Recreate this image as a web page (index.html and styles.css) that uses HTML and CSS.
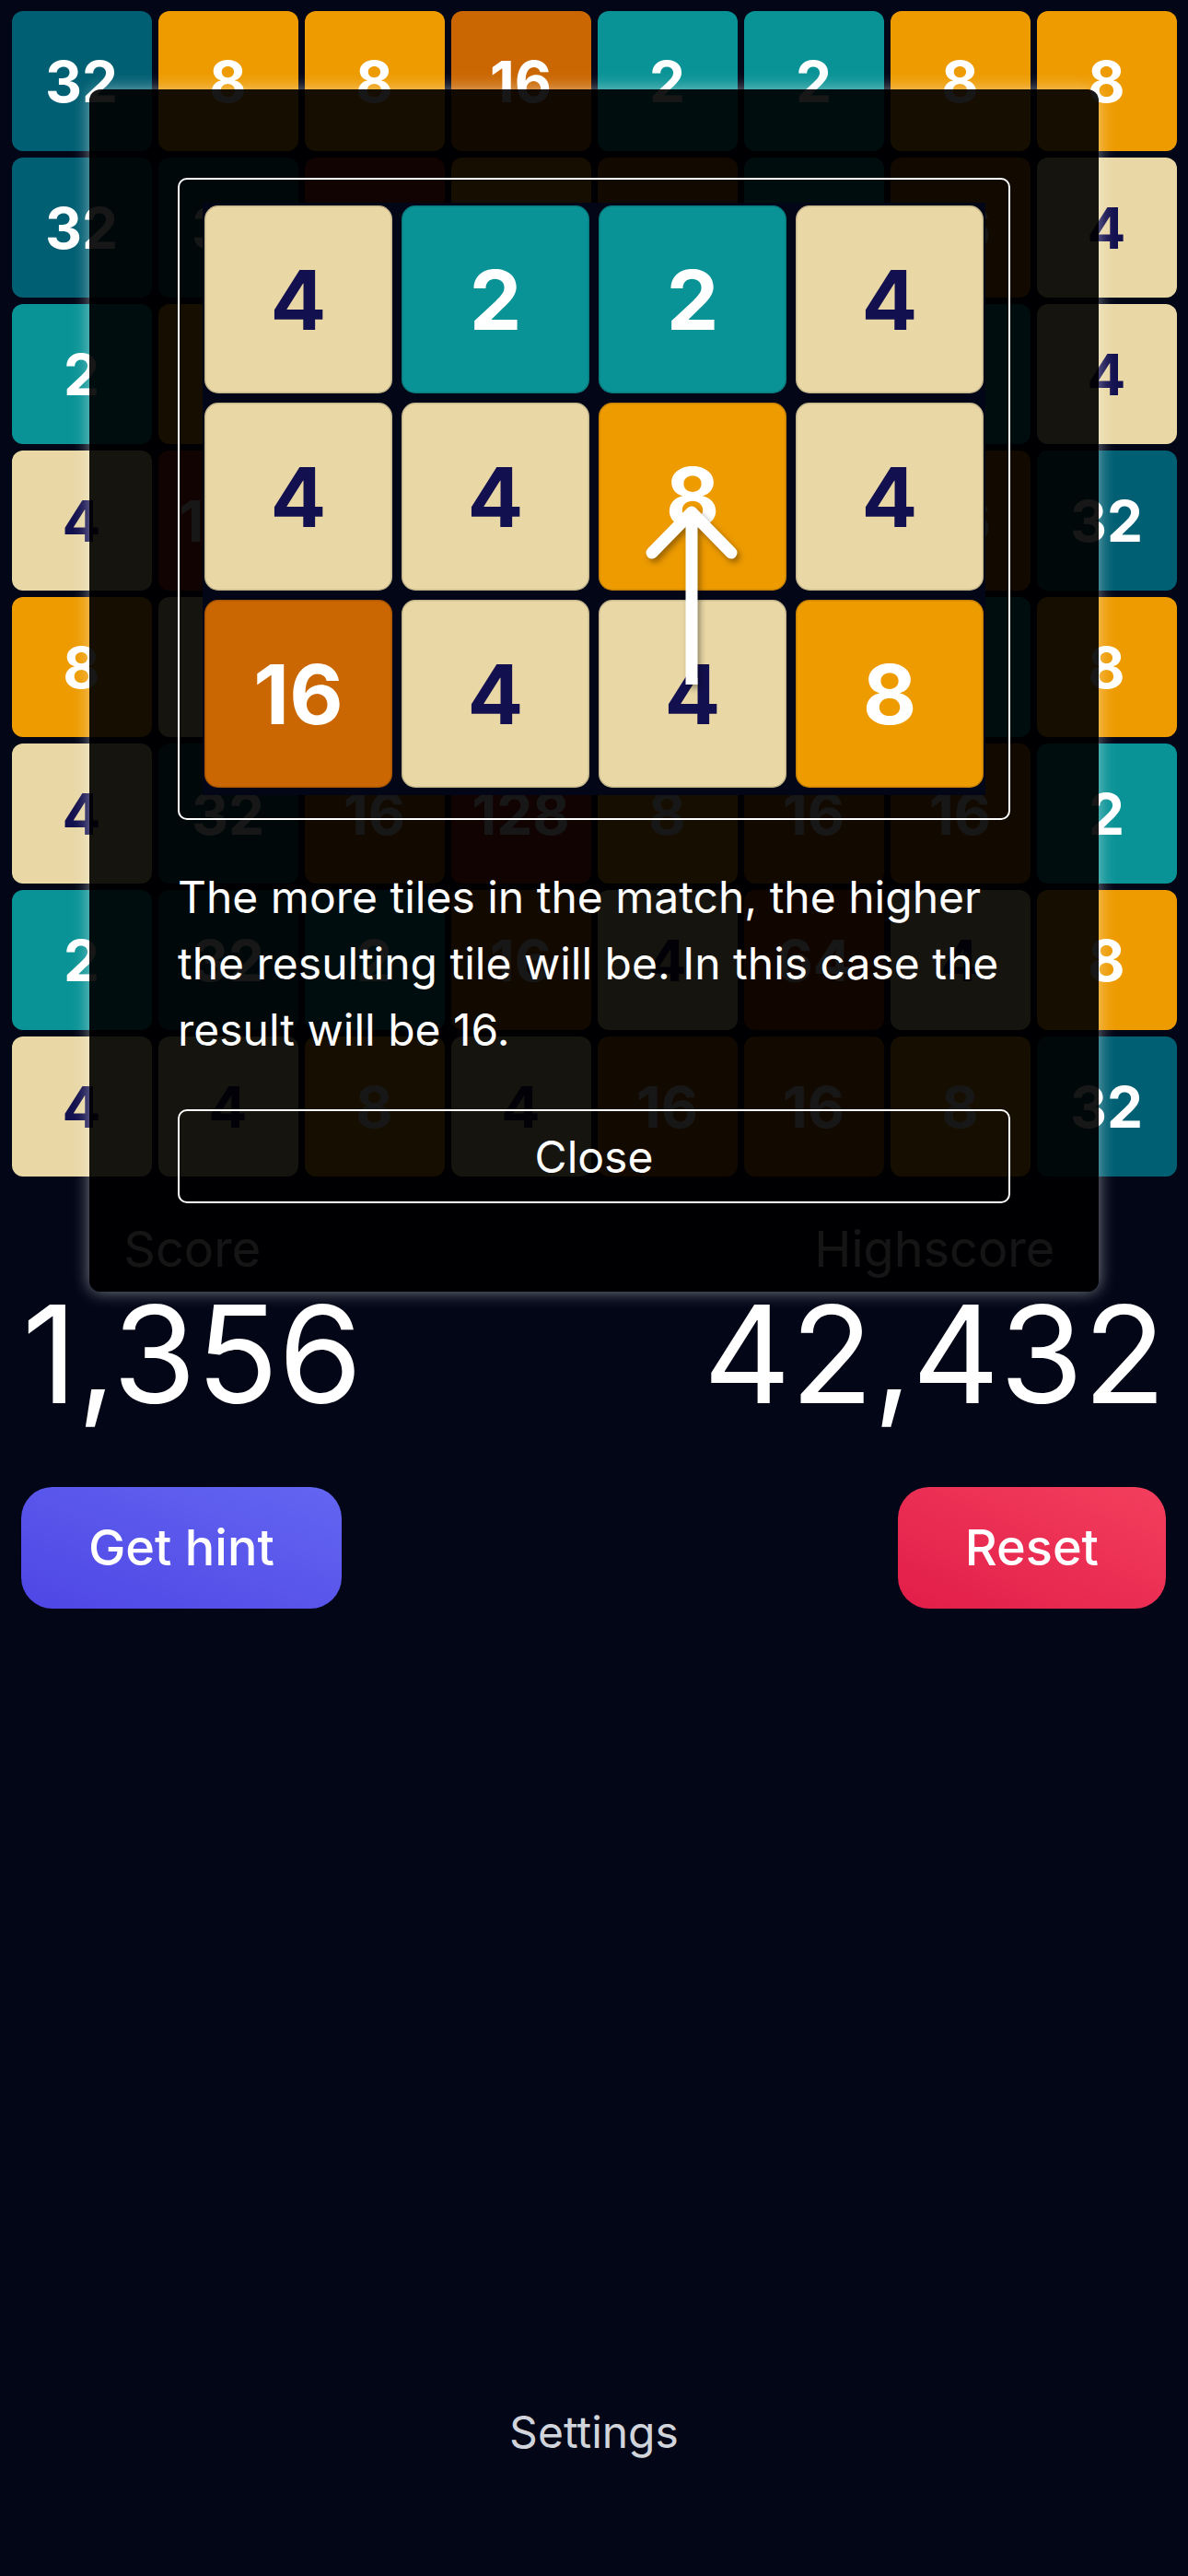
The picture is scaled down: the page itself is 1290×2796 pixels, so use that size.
FILE: index.html
```html
<!DOCTYPE html>
<html lang="en">
<head>
<meta charset="utf-8">
<title>Merge tiles</title>
<link rel="stylesheet" href="styles.css">
</head>
<body>
<div class="page">
  <div class="board">
    <div class="tile t32">32</div><div class="tile t8">8</div><div class="tile t8">8</div><div class="tile t16">16</div><div class="tile t2">2</div><div class="tile t2">2</div><div class="tile t8">8</div><div class="tile t8">8</div>
    <div class="tile t32">32</div><div class="tile t32">32</div><div class="tile t128">128</div><div class="tile t8">8</div><div class="tile t16">16</div><div class="tile t2">2</div><div class="tile t16">16</div><div class="tile t4">4</div>
    <div class="tile t2">2</div><div class="tile t8">8</div><div class="tile t4">4</div><div class="tile t2">2</div><div class="tile t16">16</div><div class="tile t4">4</div><div class="tile t2">2</div><div class="tile t4">4</div>
    <div class="tile t4">4</div><div class="tile t128">128</div><div class="tile t2">2</div><div class="tile t8">8</div><div class="tile t4">4</div><div class="tile t32">32</div><div class="tile t16">16</div><div class="tile t32">32</div>
    <div class="tile t8">8</div><div class="tile t4">4</div><div class="tile t16">16</div><div class="tile t4">4</div><div class="tile t8">8</div><div class="tile t2">2</div><div class="tile t2">2</div><div class="tile t8">8</div>
    <div class="tile t4">4</div><div class="tile t32">32</div><div class="tile t16">16</div><div class="tile t128">128</div><div class="tile t8">8</div><div class="tile t16">16</div><div class="tile t16">16</div><div class="tile t2">2</div>
    <div class="tile t2">2</div><div class="tile t32">32</div><div class="tile t2">2</div><div class="tile t16">16</div><div class="tile t4">4</div><div class="tile t64">64</div><div class="tile t4">4</div><div class="tile t8">8</div>
    <div class="tile t4">4</div><div class="tile t4">4</div><div class="tile t8">8</div><div class="tile t4">4</div><div class="tile t16">16</div><div class="tile t16">16</div><div class="tile t8">8</div><div class="tile t32">32</div>
  </div>

  <div class="scores">
    <div class="score-col">
      <div class="score-label">Score</div>
      <div class="score-value">1,356</div>
    </div>
    <div class="score-col">
      <div class="score-label">Highscore</div>
      <div class="score-value">42,432</div>
    </div>
  </div>

  <div class="actions">
    <button class="btn btn-hint">Get hint</button>
    <button class="btn btn-reset">Reset</button>
  </div>

  <div class="footer">Settings</div>
</div>

<div class="modal">
  <div class="illustration">
    <div class="shot">
      <div class="ptile t4">4</div><div class="ptile t2">2</div><div class="ptile t2">2</div><div class="ptile t4">4</div>
      <div class="ptile t4">4</div><div class="ptile t4">4</div><div class="ptile t8">8</div><div class="ptile t4">4</div>
      <div class="ptile t16">16</div><div class="ptile t4">4</div><div class="ptile t4">4</div><div class="ptile t8">8</div>
      <svg class="arrow" viewBox="0 0 850 643" xmlns="http://www.w3.org/2000/svg">
        <line x1="531" y1="523" x2="531" y2="342" stroke="#fff" stroke-width="13"/>
        <polyline points="488,380 531,336 574,380" fill="none" stroke="#fff" stroke-width="13" stroke-linecap="round" stroke-linejoin="round"/>
      </svg>
    </div>
  </div>
  <p class="modal-text">The more tiles in the match, the higher the resulting tile will be. In this case the result will be 16.</p>
  <button class="close-btn">Close</button>
</div>
</body>
</html>
```

FILE: styles.css
```css
html, body {
  margin: 0;
  padding: 0;
  background: #020617;
}

body {
  position: relative;
  width: 1290px;
  min-height: 2796px;
  font-family: Inter, "Noto Sans", sans-serif;
  color: #fff;
}

.page {
  display: flex;
  flex-direction: column;
  min-height: 2796px;
  box-sizing: border-box;
  padding-top: 12px;
}

.board {
  width: 1265px;
  margin: 0 auto;
  display: grid;
  grid-template-columns: repeat(8, 1fr);
  gap: 7px;
}

.tile {
  height: 152px;
  border-radius: 12px;
  display: flex;
  align-items: center;
  justify-content: center;
  font-weight: 700;
  font-size: 62px;
  color: #fff;
}

.t2 { background: #0a9396; }
.t4 { background: #e9d8a6; color: #13104f !important; }
.t8 { background: #ee9b00; }
.t16 { background: #ca6702; }
.t32 { background: #005f73; }
.t64 { background: #bb3e03; }
.t128 { background: #ae2012; }

.scores {
  display: flex;
  justify-content: space-between;
  padding: 0 24px;
  margin-top: 37px;
}

.score-col {
  display: flex;
  flex-direction: column;
  align-items: center;
}

.score-label {
  font-size: 54px;
  line-height: 84px;
  color: #e5e7eb;
}

.score-value {
  font-size: 147px;
  line-height: 143px;
  color: #fff;
}

.actions {
  display: flex;
  justify-content: space-between;
  padding: 0 24px 0 23px;
  margin-top: 73px;
}

.btn {
  border: none;
  border-radius: 34px;
  padding: 24px 73px;
  font-family: Inter, "Noto Sans", sans-serif;
  font-weight: 500;
  font-size: 54px;
  line-height: 84px;
  color: #fff;
}

.btn-hint {
  background: linear-gradient(to top right, #4f46e5, #6366f1);
}

.btn-reset {
  background: linear-gradient(to top right, #e11d48, #f43f5e);
}

.footer {
  margin-top: auto;
  padding-bottom: 120px;
  text-align: center;
  font-size: 48px;
  line-height: 72px;
  color: #d1d5db;
}

/* Modal overlay */
.modal {
  position: absolute;
  left: 97px;
  top: 97px;
  width: 1096px;
  box-sizing: border-box;
  padding: 96px;
  display: flex;
  flex-direction: column;
  gap: 48px;
  background: rgba(0, 0, 0, 0.91);
  border-radius: 12px;
  box-shadow: 0 0 18px rgba(255, 255, 255, 0.5);
}

.illustration {
  border: 2px solid #fff;
  border-radius: 10px;
  padding: 25px;
}

.shot {
  position: relative;
  background: #020617;
  display: grid;
  grid-template-columns: repeat(4, 204px);
  gap: 10px;
  padding: 3px 2px 8px 2px;
}

.ptile {
  height: 204px;
  border-radius: 15px;
  display: flex;
  align-items: center;
  justify-content: center;
  font-weight: 700;
  font-size: 90px;
  color: #fff;
  box-shadow: inset 0 0 0 1.5px rgba(0, 0, 0, 0.15);
}

.arrow {
  position: absolute;
  left: 0;
  top: 0;
  width: 100%;
  height: 100%;
  filter: drop-shadow(3px 4px 3px rgba(0, 0, 0, 0.35));
}

.modal-text {
  margin: 0;
  font-size: 48px;
  line-height: 72px;
  color: #fff;
}

.close-btn {
  height: 102px;
  margin-top: 2px;
  border: 2px solid #fff;
  border-radius: 10px;
  background: transparent;
  color: #fff;
  font-family: Inter, "Noto Sans", sans-serif;
  font-size: 48px;
  font-weight: 400;
}
```
